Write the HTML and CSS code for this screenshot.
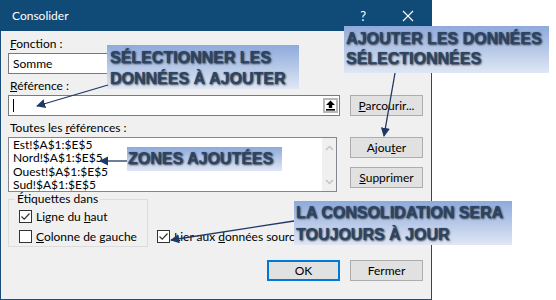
FILE: index.html
```html
<!DOCTYPE html>
<html lang="fr">
<head>
    <meta charset="UTF-8">
    <meta name="viewport" content="width=device-width, initial-scale=1.0">
    <title>Consolider</title>
    <link rel="stylesheet" href="styles.css">
</head>
<body>
<div class="page">
    <div class="dialog">
        <div class="titlebar">
            <span class="title">Consolider</span>
            <span class="title-help">?</span>
            <svg class="title-close" width="12" height="12" viewBox="0 0 12 12">
                <path d="M1 1 L11 11 M11 1 L1 11" stroke="#fff" stroke-width="1.2" fill="none"/>
            </svg>
        </div>

        <div class="content">
            <div class="label"><u>F</u>onction :</div>
            <div class="combo">Somme</div>

            <div class="label label-gap"><u>R</u>éférence :</div>
            <div class="row">
                <div class="ref-input">
                    <span class="caret"></span>
                    <span class="collapse-btn">
                        <svg width="11" height="11" viewBox="0 0 11 11">
                            <path d="M5.5 0.5 L10 5 L7.2 5 L7.2 8 L3.8 8 L3.8 5 L1 5 Z" fill="#000"/>
                            <rect x="1" y="9" width="9" height="1.6" fill="#000"/>
                        </svg>
                    </span>
                </div>
                <button class="btn"><u>P</u>arcourir...</button>
            </div>

            <div class="label label-gap">Toutes les <u>r</u>éférences :</div>
            <div class="row">
                <div class="listbox">
                    <ul class="list-items">
                        <li>Est!$A$1:$E$5</li>
                        <li>Nord!$A$1:$E$5</li>
                        <li>Ouest!$A$1:$E$5</li>
                        <li>Sud!$A$1:$E$5</li>
                    </ul>
                    <div class="scrollbar">
                        <svg width="9" height="6" viewBox="0 0 9 6">
                            <path d="M1 5 L4.5 1.5 L8 5" stroke="#c2c2c2" stroke-width="1.4" fill="none"/>
                        </svg>
                        <svg width="9" height="6" viewBox="0 0 9 6">
                            <path d="M1 1 L4.5 4.5 L8 1" stroke="#c2c2c2" stroke-width="1.4" fill="none"/>
                        </svg>
                    </div>
                </div>
                <div class="side-buttons">
                    <button class="btn">Ajou<u>t</u>er</button>
                    <button class="btn"><u>S</u>upprimer</button>
                </div>
            </div>

            <div class="options">
                <fieldset class="group">
                    <legend>Étiquettes dans</legend>
                    <div class="check">
                        <span class="box">
                            <svg width="11" height="11" viewBox="0 0 11 11">
                                <path d="M1.5 5.5 L4.2 8.2 L9.5 2.5" stroke="#333" stroke-width="1.2" fill="none"/>
                            </svg>
                        </span>
                        <span>Ligne du <u>h</u>aut</span>
                    </div>
                    <div class="check">
                        <span class="box"></span>
                        <span><u>C</u>olonne de gauche</span>
                    </div>
                </fieldset>
                <div class="check check-link">
                    <span class="box">
                        <svg width="11" height="11" viewBox="0 0 11 11">
                            <path d="M1.5 5.5 L4.2 8.2 L9.5 2.5" stroke="#333" stroke-width="1.2" fill="none"/>
                        </svg>
                    </span>
                    <span>Lier aux <u>d</u>onnées sources</span>
                </div>
            </div>

            <div class="footer">
                <button class="btn btn-default">OK</button>
                <button class="btn">Fermer</button>
            </div>
        </div>
    </div>

    <!-- callouts drawn over the dialog -->
    <div class="callout callout-select">SÉLECTIONNER LES<br>DONNÉES À AJOUTER</div>
    <div class="callout callout-add">AJOUTER LES DONNÉES<br>SÉLECTIONNÉES</div>
    <div class="callout callout-zones">ZONES AJOUTÉES</div>
    <div class="callout callout-link">LA CONSOLIDATION SERA<br>TOUJOURS À JOUR</div>

    <svg class="arrows" width="556" height="300" viewBox="0 0 556 300">
        <defs>
            <marker id="head" viewBox="0 0 10 10" refX="9" refY="5" markerWidth="7" markerHeight="7" orient="auto">
                <path d="M0 0 L10 5 L0 10 Z" fill="#1f3864"/>
            </marker>
        </defs>
        <line x1="108" y1="85" x2="37" y2="106" marker-end="url(#head)"/>
        <line x1="127" y1="161" x2="100" y2="161" marker-end="url(#head)"/>
        <line x1="395" y1="73" x2="384" y2="136" marker-end="url(#head)"/>
        <line x1="294" y1="221" x2="171" y2="240" marker-end="url(#head)"/>
    </svg>
</div>
</body>
</html>
```

FILE: styles.css
```css
body {
    margin: 0;
    background: #fff;
    font-family: Lato, "Noto Sans", sans-serif;
    font-size: 12px;
    color: #000;
}
.page {
    position: relative;
    width: 556px;
    height: 300px;
    overflow: hidden;
}
.dialog {
    width: 432px;
    height: 300px;
}
.titlebar {
    display: flex;
    align-items: center;
    height: 31px;
    padding-left: 12px;
    background: #0f4b76;
    color: #fff;
}
.title {
    font-size: 12px;
}
.title-help {
    margin-left: auto;
    font-size: 13px;
}
.title-close {
    margin-left: 36px;
    margin-right: 18px;
}
.content {
    box-sizing: border-box;
    height: 269px;
    padding: 5px 8px 0 7px;
    background: #f0f0f0;
    border: 1px solid #1b4e78;
    border-top: none;
}
.label {
    height: 15px;
    line-height: 15px;
    padding-left: 2px;
}
.label-gap {
    margin-top: 4px;
}
.combo {
    box-sizing: border-box;
    width: 200px;
    height: 21px;
    margin-top: 2px;
    padding-left: 4px;
    line-height: 19px;
    background: #fff;
    border: 1px solid #7a7a7a;
}
.row {
    display: flex;
    align-items: flex-start;
    margin-top: 2px;
}
.ref-input {
    box-sizing: border-box;
    display: flex;
    align-items: center;
    width: 332px;
    height: 21px;
    background: #fff;
    border: 1px solid #7a7a7a;
}
.caret {
    width: 1px;
    height: 13px;
    margin-left: 4px;
    background: #000;
}
.collapse-btn {
    box-sizing: border-box;
    display: flex;
    align-items: center;
    justify-content: center;
    width: 15px;
    height: 15px;
    margin-left: auto;
    margin-right: 1px;
    background: #fff;
    border: 2px solid #b8b8b8;
}
.btn {
    box-sizing: border-box;
    width: 73px;
    height: 21px;
    margin-left: auto;
    padding: 0;
    font-family: inherit;
    font-size: 12px;
    color: #000;
    background: #e1e1e1;
    border: 1px solid #adadad;
}
.btn-default {
    border: 2px solid #0078d7;
}
.listbox {
    box-sizing: border-box;
    display: flex;
    width: 329px;
    height: 55px;
    background: #fff;
    border: 1px solid #828790;
}
.list-items {
    flex: 1;
    margin: 0;
    padding: 0 0 0 4px;
    list-style: none;
    line-height: 13.4px;
}
.scrollbar {
    display: flex;
    flex-direction: column;
    justify-content: space-between;
    align-items: center;
    width: 14px;
    padding: 7px 0 6px;
    background: #f0f0f0;
}
.side-buttons {
    display: flex;
    flex-direction: column;
    gap: 9px;
    margin-left: auto;
}
.options {
    display: flex;
    align-items: flex-end;
    margin-top: 0;
}
.group {
    box-sizing: border-box;
    width: 140px;
    margin: 0;
    padding: 0 0 0 10px;
    border: 1px solid #dcdcdc;
}
.group legend {
    padding: 0 2px;
    margin-left: -4px;
    line-height: 14px;
}
.check {
    display: flex;
    align-items: center;
    height: 20px;
}
.box {
    box-sizing: border-box;
    display: flex;
    align-items: center;
    justify-content: center;
    width: 13px;
    height: 13px;
    margin-right: 4px;
    background: #fff;
    border: 1px solid #333;
}
.check-link {
    margin-left: 9px;
    margin-bottom: 1px;
}
.footer {
    display: flex;
    justify-content: flex-end;
    gap: 10px;
    margin-top: 13px;
}
.footer .btn {
    margin-left: 0;
}

/* callouts */
.callout {
    position: absolute;
    box-sizing: border-box;
    font-family: "Liberation Sans", Arial, sans-serif;
    font-weight: bold;
    font-size: 16px;
    line-height: 21px;
    color: #2b4568;
    text-shadow: 1px 1px 2px rgba(0, 0, 0, 0.75), 0 0 1px rgba(0, 0, 0, 0.35);
    background: linear-gradient(to bottom, #8eaadb, #dfe7f5);
    white-space: nowrap;
}
.callout-select {
    left: 107px;
    top: 45px;
    width: 192px;
    height: 44px;
    padding: 2px 0 0 3px;
}
.callout-add {
    left: 344px;
    top: 26px;
    width: 205px;
    height: 47px;
    padding: 3px 0 0 2px;
    line-height: 20px;
}
.callout-zones {
    left: 127px;
    top: 147px;
    width: 155px;
    height: 24px;
    padding-left: 1px;
    line-height: 24px;
}
.callout-link {
    left: 294px;
    top: 201px;
    width: 218px;
    height: 44px;
    padding: 1px 0 0 2px;
    line-height: 22px;
}
.arrows {
    position: absolute;
    left: 0;
    top: 0;
    pointer-events: none;
}
.arrows line {
    stroke: #1f3864;
    stroke-width: 1.3;
}
```
